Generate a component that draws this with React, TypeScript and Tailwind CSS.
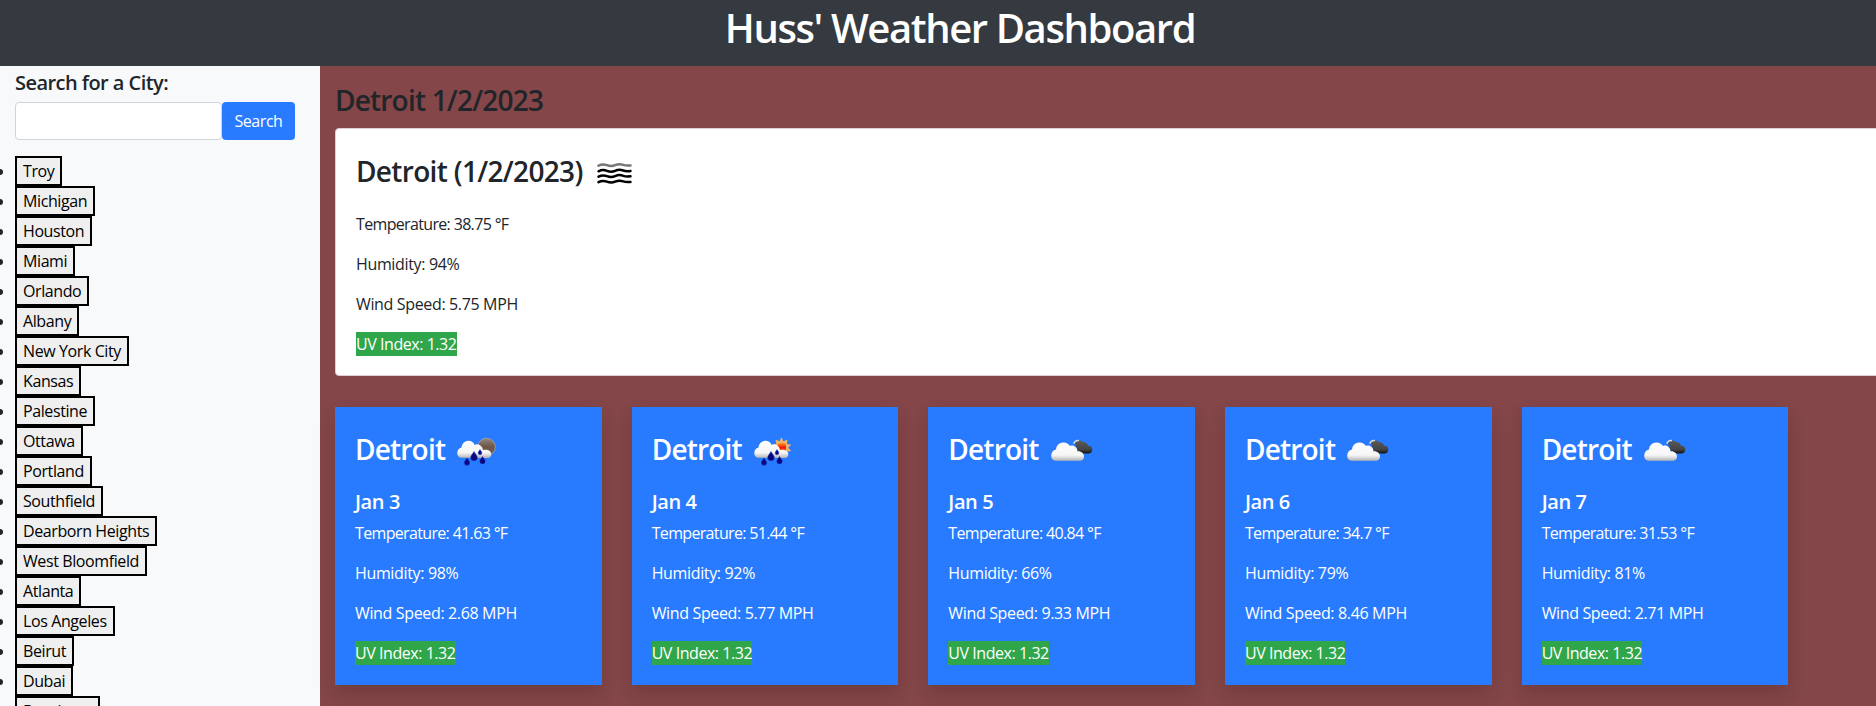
import React from "react";

type Icon = "mist" | "rainNight" | "rainDay" | "clouds";

const cities = [
  "Troy", "Michigan", "Houston", "Miami", "Orlando", "Albany", "New York City", "Kansas", "Palestine", "Ottawa",
  "Portland", "Southfield", "Dearborn Heights", "West Bloomfield", "Atlanta", "Los Angeles", "Beirut", "Dubai", "Dearborn",
];

const forecast: { day: string; temp: string; hum: string; wind: string; icon: Icon }[] = [
  { day: "Jan 3", temp: "41.63", hum: "98", wind: "2.68", icon: "rainNight" },
  { day: "Jan 4", temp: "51.44", hum: "92", wind: "5.77", icon: "rainDay" },
  { day: "Jan 5", temp: "40.84", hum: "66", wind: "9.33", icon: "clouds" },
  { day: "Jan 6", temp: "34.7", hum: "79", wind: "8.46", icon: "clouds" },
  { day: "Jan 7", temp: "31.53", hum: "81", wind: "2.71", icon: "clouds" },
];

function WeatherIcon({ icon }: { icon: Icon }) {
  return (
    <svg width="50" height="50" viewBox="0 0 50 50" className="shrink-0">
      <defs>
        <linearGradient id="cloud" x1="0" y1="0" x2="0" y2="1">
          <stop offset="0" stopColor="#fff" />
          <stop offset="0.7" stopColor="#f6f6f6" />
          <stop offset="1" stopColor="#b4b4b4" />
        </linearGradient>
        <linearGradient id="dark" x1="0" y1="0" x2="0" y2="1">
          <stop offset="0" stopColor="#5a5a5a" />
          <stop offset="0.7" stopColor="#444" />
          <stop offset="1" stopColor="#111" />
        </linearGradient>
        <linearGradient id="moon" x1="0" y1="0" x2="0" y2="1">
          <stop offset="0" stopColor="#94867c" />
          <stop offset="0.5" stopColor="#6b5547" />
          <stop offset="1" stopColor="#77624f" />
        </linearGradient>
        <linearGradient id="sun" x1="0" y1="0" x2="0" y2="1">
          <stop offset="0" stopColor="#ff9a1e" />
          <stop offset="0.5" stopColor="#f01808" />
          <stop offset="1" stopColor="#ff6a10" />
        </linearGradient>
      </defs>
      {icon === "mist" && (
        <g fill="none" strokeWidth="2.5" strokeLinecap="round">
          {[16.1, 21.7, 27, 32.6].map((y, i) => (
            <path
              key={y}
              stroke={i === 0 ? "#777" : "#000"}
              d={`M9.500 ${y + 0.6}c2.600-1.300 5.600-1.600 8.400-.5s5.600 1.200 8.200 0 5.600-1.300 8.200-.3 3.600.9 7.200.5`}
            />
          ))}
        </g>
      )}
      {icon === "clouds" && (
        <g>
          <path d="M29 16.500a5 5 0 0 1 8-1.600 5 5 0 0 1 5 3.900 3.500 3.500 0 0 1 4.300 3.400c0 2.800-1.500 4.300-4.300 4.300H33z" fill="url(#dark)" />
          <path d="M27.800 16.800a4.700 4.700 0 0 1 5.200-3.300" stroke="#d8d8d8" strokeWidth="1.500" fill="none" />
          <path d="M9 33.700a5 5 0 0 1-3.800-4.900 6.500 6.500 0 0 1 4.800-6.200 7.500 7.500 0 0 1 7.200-7.200 7.500 7.500 0 0 1 6.700 3.500c3.700-1.400 7.300 1.300 7.600 5.500 3.700-.4 6.500 2 6.500 5.300a4.300 4.300 0 0 1-3.600 4z" fill="url(#cloud)" />
        </g>
      )}
      {(icon === "rainNight" || icon === "rainDay") && (
        <g>
          {icon === "rainNight" ? (
            <circle cx="34.500" cy="20" r="8.800" fill="url(#moon)" stroke="#b3a79f" strokeWidth="0.700" />
          ) : (
            <g>
              <path
                d="M32.500 10.300l2 4 4-1.800-.7 4.400 4.500.9-3.200 3 3.200 3.200-4.500.8.700 4.400-4-1.800-2 4-2-4-4 1.800.7-4.400-4.500-.8 3.200-3.200-3.200-3 4.500-.9-.7-4.400 4 1.800z"
                fill="#efb36d"
              />
              <rect x="28.500" y="16" width="8.500" height="9" rx="2.500" fill="url(#sun)" />
            </g>
          )}
          <path d="M8.500 30.700a4.800 4.800 0 0 1-3.200-4.700 5.800 5.800 0 0 1 4.200-5.500 7.200 7.200 0 0 1 6.800-6.700 7 7 0 0 1 6.300 4.100 6 6 0 0 1 8.400 5c4.800-1 8.300.8 8.300 4.400 0 2-1.200 3.200-3 3.600z" fill="url(#cloud)" />
          <g fill="#08087c" stroke="#1b2fc0" strokeWidth="0.500">
            <path d="M22 24.500c1.300 2.500 3.300 4 3.300 6a3.300 3.300 0 0 1-6.600 0c0-2 2-3.500 3.300-6z" />
            <path d="M15 31c1 2 2.600 3 2.600 4.700a2.600 2.600 0 0 1-5.200 0c0-1.700 1.600-2.700 2.600-4.700z" />
            <path d="M30.500 29.500c1 2 2.700 3 2.700 4.700a2.700 2.700 0 0 1-5.400 0c0-1.700 1.700-2.700 2.700-4.700z" />
            <path d="M28 22.500c.7 1.500 1.800 2.200 1.800 3.500a1.800 1.800 0 0 1-3.600 0c0-1.300 1.100-2 1.800-3.500z" />
          </g>
        </g>
      )}
    </svg>
  );
}

function Readings({ temp, hum, wind }: { temp: string; hum: string; wind: string }) {
  return (
    <div className="flex flex-col items-start gap-4 leading-6">
      <p className="tracking-[-0.66px]">Temperature: {temp} °F</p>
      <p className="tracking-[-0.35px]">Humidity: {hum}%</p>
      <p className="tracking-[-0.35px]">Wind Speed: {wind} MPH</p>
      <p className="bg-[#30a64a] tracking-[-0.45px] text-white">UV Index: 1.32</p>
    </div>
  );
}

export default function App() {
  return (
    <div className="h-[706px] overflow-hidden bg-[#844648] font-['Open_Sans',sans-serif] text-base tracking-[-0.45px] text-[#212529]">
      <div className="flex h-full w-[1920px] flex-col">
        <header className="h-[66px] shrink-0 bg-[#343a40] pt-1 text-center text-white">
          <h1 className="text-[40px] leading-12 font-semibold tracking-[-1.4px]">Huss' Weather Dashboard</h1>
        </header>
        <div className="flex min-h-0 flex-1">
          <aside className="w-80 shrink-0 bg-[#f8f9fa] px-[15px] pt-[5px]">
            <h2 className="mb-[7px] text-xl leading-6 font-semibold tracking-[-0.55px]">Search for a City:</h2>
            <div className="flex h-[38px]">
              <input aria-label="City" className="w-[207px] rounded border border-[#ced4da] bg-white px-3" />
              <button className="w-[73px] rounded bg-[#287bff] text-white">Search</button>
            </div>
            <ul className="mt-4 list-disc">
              {cities.map((c) => (
                <li key={c} className="h-[30px] leading-[30px]">
                  <button className="border-2 border-black bg-[#efefef] px-1.5 py-px align-top leading-6 tracking-[-0.4px] whitespace-nowrap text-black">
                    {c}
                  </button>
                </li>
              ))}
            </ul>
          </aside>
          <main className="min-w-0 flex-1 px-[15px] pt-4">
            <h2 className="mb-2.5 text-[28px] leading-9 font-semibold tracking-[-0.8px]">Detroit 1/2/2023</h2>
            <section className="h-[248px] rounded border border-[#dfcfd0] bg-white px-5 pt-5">
              <div className="flex h-[50px] items-center gap-1.5">
                <h3 className="pb-1.5 text-[28px] leading-9 font-semibold tracking-[-0.67px]">Detroit (1/2/2023)</h3>
                <WeatherIcon icon="mist" />
              </div>
              <div className="mt-[13px]">
                <Readings temp="38.75" hum="94" wind="5.75" />
              </div>
            </section>
            <div className="mt-[31px] grid grid-cols-[repeat(5,266.67px)] gap-[30px]">
              {forecast.map((f) => (
                <section key={f.day} className="h-[278px] bg-[#287bff] px-5 pt-5 text-white shadow-[0_8px_16px_rgba(0,0,0,0.15)]">
                  <div className="flex h-[50px] items-center gap-[7px]">
                    <h3 className="pb-1.5 text-[28px] leading-9 font-semibold tracking-[-0.8px]">Detroit</h3>
                    <WeatherIcon icon={f.icon} />
                  </div>
                  <h4 className="mt-[13px] mb-[7px] text-xl leading-6 font-semibold tracking-[-0.4px]">{f.day}</h4>
                  <Readings temp={f.temp} hum={f.hum} wind={f.wind} />
                </section>
              ))}
            </div>
          </main>
        </div>
      </div>
    </div>
  );
}
